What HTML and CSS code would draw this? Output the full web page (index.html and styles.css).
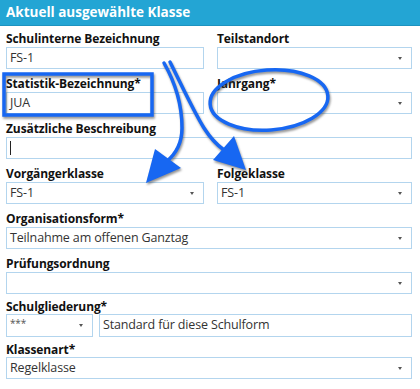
FILE: index.html
```html
<!DOCTYPE html>
<html>
<head lang="de">
  <meta charset="UTF-8">
  <title>Klasse</title>
  <link rel="stylesheet" href="styles.css">
</head>
<body>

<div class="panel">
  <!-- Kopfzeile -->
  <div class="panel-head">Aktuell ausgewählte Klasse</div>

  <div class="form">
    <div class="pair">
      <div class="field">
        <label>Schulinterne Bezeichnung</label>
        <div class="box">FS-1</div>
      </div>
      <div class="field">
        <label>Teilstandort</label>
        <div class="box combo"></div>
      </div>
    </div>

    <div class="pair">
      <div class="field">
        <label>Statistik-Bezeichnung*</label>
        <div class="box">JUA</div>
      </div>
      <div class="field">
        <label>Jahrgang*</label>
        <div class="box combo"></div>
      </div>
    </div>

    <div class="field">
      <label>Zusätzliche Beschreibung</label>
      <div class="box"><span class="caret"></span></div>
    </div>

    <div class="pair">
      <div class="field">
        <label>Vorgängerklasse</label>
        <div class="box combo">FS-1</div>
      </div>
      <div class="field">
        <label>Folgeklasse</label>
        <div class="box combo">FS-1</div>
      </div>
    </div>

    <div class="field">
      <label>Organisationsform*</label>
      <div class="box combo">Teilnahme am offenen Ganztag</div>
    </div>

    <div class="field">
      <label>Prüfungsordnung</label>
      <div class="box combo"></div>
    </div>

    <div class="field tight">
      <label>Schulgliederung*</label>
      <div class="split">
        <div class="box combo small">***</div>
        <div class="box wide">Standard für diese Schulform</div>
      </div>
    </div>

    <div class="field tight">
      <label>Klassenart*</label>
      <div class="box combo">Regelklasse</div>
    </div>
  </div>

  <!-- Markierungen über dem Formular -->
  <svg class="marks" width="420" height="389" viewBox="0 0 420 389">
    <g fill="none" stroke="#1767f2" stroke-width="3.5" stroke-linecap="round">
      <rect x="4" y="74" width="148" height="41"/>
      <ellipse cx="269" cy="100" rx="59" ry="30" transform="rotate(-4 269 100)"/>
      <path d="M164 63 C176 84 182 104 182 128 C182 144 176 154 166 162"/>
      <path d="M170 62 C184 90 194 112 204 128 C211 139 217 145 224 150"/>
    </g>
    <g fill="#1767f2">
      <polygon points="146,183 155,149 181,168"/>
      <polygon points="246,170 213,160 234,136"/>
    </g>
  </svg>
</div>

</body>
</html>
```

FILE: styles.css
```css
* {
  margin: 0;
  padding: 0;
  box-sizing: border-box;
}

body {
  background: #fff;
  font-family: "Open Sans", "Noto Sans", sans-serif;
  color: #1a1a1a;
}

.panel {
  position: relative;
  width: 420px;
  height: 389px;
  overflow: hidden;
}

.panel-head {
  height: 26px;
  line-height: 25px;
  padding-left: 6px;
  background: #23a5d4;
  border-bottom: 1px solid #1d93c0;
  color: #fff;
  font-size: 13.5px;
  font-weight: bold;
}

.form {
  padding: 5px 8px 0 6px;
}

.pair {
  display: grid;
  grid-template-columns: 198px 195px;
  column-gap: 13px;
}

.field {
  margin-bottom: 7px;
}

.field label {
  display: block;
  height: 16px;
  line-height: 16px;
  font-size: 12px;
  letter-spacing: -0.1px;
  font-weight: bold;
  color: #111;
  white-space: nowrap;
}

.box {
  position: relative;
  height: 22px;
  line-height: 20px;
  padding-left: 3px;
  border: 1px solid #b3d5ee;
  background: #fff;
  font-size: 12.5px;
  letter-spacing: -0.15px;
  color: #333;
}

.combo::after {
  content: "";
  position: absolute;
  right: 9px;
  top: 9px;
  border-left: 2.5px solid transparent;
  border-right: 2.5px solid transparent;
  border-top: 3px solid #555;
}

.caret {
  display: inline-block;
  width: 1px;
  height: 14px;
  margin-top: 3px;
  background: #222;
  vertical-align: top;
}

.tight {
  margin-top: 3px;
}

.tight label {
  height: 13px;
  line-height: 12px;
}

.split {
  display: flex;
  gap: 6px;
}

.split .small {
  width: 87px;
  height: 23px;
  font-size: 10px;
  color: #555;
  line-height: 16px;
}

.split .wide {
  flex: 1;
  height: 23px;
}

.marks {
  position: absolute;
  left: 0;
  top: 0;
  pointer-events: none;
  filter: drop-shadow(1px 2px 1px rgba(60, 60, 60, 0.55));
}
```
